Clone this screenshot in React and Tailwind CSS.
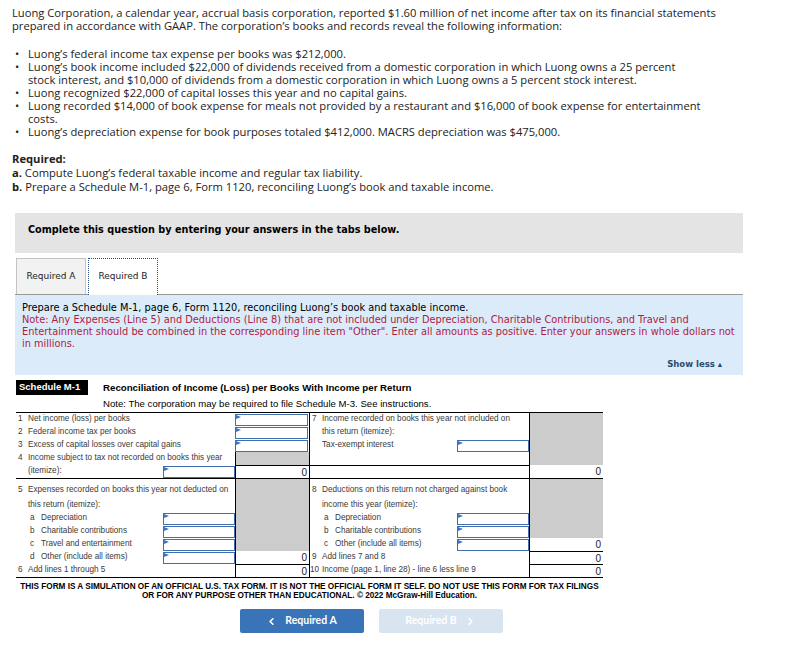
import React from "react";
import { ChevronLeft, ChevronRight } from "lucide-react";

const Flag = () => (
  <svg className="absolute left-0 top-0" width="5" height="5" viewBox="0 0 5 5">
    <polygon points="0,0 5,2 0,4" fill="#3f74c0" />
  </svg>
);

const Box = ({ className = "" }) => (
  <div className={"relative border border-[#3f6fae] bg-white " + className}>
    <Flag />
  </div>
);

// label cell (219px), value cell (74px)
const Lbl = ({ h, children, input, className = "" }) => (
  <div className={"relative flex items-center w-[219px] " + className} style={{ height: h }}>
    <div className="flex-1 whitespace-nowrap">{children}</div>
    {input && <Box className="w-[72px] h-[12px]" />}
  </div>
);

const Val = ({ h, kind, className = "" }) => {
  if (kind === "input") return <div className="w-[74px] flex items-center" style={{ height: h }}><Box className="w-[73px] h-[12px]" /></div>;
  return (
    <div
      className={"w-[74px] border-l border-black flex items-center justify-end pr-[2px] text-[10px] text-[#222] " + (kind === "gray" ? "bg-[#cccccc] " : "") + className}
      style={{ height: h }}
    >
      {kind === "gray" || kind === "blank" ? "" : kind}
    </div>
  );
};

const Row = ({ h, label, input, val, valClass, lclass }) => (
  <div className="flex">
    <Lbl h={h} input={input} className={lclass}>{label}</Lbl>
    <Val h={h} kind={val} className={valClass} />
  </div>
);

const Num = ({ n, children }) => (
  <span className="flex">
    <span className="w-[12px] pl-[2px]">{n}</span>
    <span>{children}</span>
  </span>
);

const Sub = ({ n, children }) => (
  <span className="flex pl-[14px]">
    <span className="w-[11px]">{n}</span>
    <span>{children}</span>
  </span>
);

const ScheduleM1 = () => {
  const H = [13, 13, 13, 13, 13, 19, 14, 13, 13, 13, 13, 13];
  return (
    <div className="ml-[4px] w-[587px] font-['Liberation_Sans',Arial,sans-serif]">
      <div className="flex items-start pt-[5px]">
        <div className="bg-black text-white font-bold text-[9.5px] w-[72px] h-[15px] flex items-center pl-[3px]">Schedule M-1</div>
        <div className="ml-[15px]">
          <div className="font-bold text-[9.7px] text-black leading-[15px]">Reconciliation of Income (Loss) per Books With Income per Return</div>
          <div className="text-[9.6px] text-black leading-[12px] mt-[3px]">Note: The corporation may be required to file Schedule M-3. See instructions.</div>
        </div>
      </div>
      <div className="flex border-t border-b border-black text-[8.2px] text-[#3a3a3a] mt-[2px]">
        {/* left half */}
        <div className="flex flex-col">
          <Row h={H[0]} label={<Num n="1">Net income (loss) per books</Num>} val="input" />
          <Row h={H[1]} label={<Num n="2">Federal income tax per books</Num>} val="input" />
          <Row h={H[2]} label={<Num n="3">Excess of capital losses over capital gains</Num>} val="input" />
          <Row h={H[3]} label={<Num n="4">Income subject to tax not recorded on books this year</Num>} val="gray" />
          <Row h={H[4]} label={<span className="pl-[12px]">(itemize):</span>} input val="0" valClass="border-t" />
          <div className="flex border-t border-black">
            <Lbl h={H[5]} className="items-end pb-[2px]"><Num n="5">Expenses recorded on books this year not deducted on</Num></Lbl>
            <Val h={H[5]} kind="gray" />
          </div>
          <Row h={H[6]} label={<span className="pl-[12px]">this return (itemize):</span>} val="gray" />
          <Row h={H[7]} label={<Sub n="a">Depreciation</Sub>} input val="gray" />
          <Row h={H[8]} label={<Sub n="b">Charitable contributions</Sub>} input val="gray" />
          <Row h={H[9]} label={<Sub n="c">Travel and entertainment</Sub>} input val="gray" />
          <Row h={H[10]} label={<Sub n="d">Other (include all items)</Sub>} input val="0" />
          <Row h={H[11]} label={<Num n="6">Add lines 1 through 5</Num>} val="0" valClass="border-t" />
        </div>
        {/* right half */}
        <div className="flex flex-col border-l border-black">
          <Row h={H[0]} label={<Num n="7">Income recorded on books this year not included on</Num>} val="gray" />
          <Row h={H[1]} label={<span className="pl-[12px]">this return (itemize):</span>} val="gray" />
          <Row h={H[2]} label={<span className="pl-[12px]">Tax-exempt interest</span>} input val="gray" />
          <Row h={H[3]} label="" val="gray" />
          <Row h={H[4]} label="" val="0" lclass="border-t border-black" />
          <div className="flex border-t border-black">
            <Lbl h={H[5]} className="items-end pb-[2px]"><Num n="8">Deductions on this return not charged against book</Num></Lbl>
            <Val h={H[5]} kind="gray" />
          </div>
          <Row h={H[6]} label={<span className="pl-[12px]">income this year (itemize):</span>} val="gray" />
          <Row h={H[7]} label={<Sub n="a">Depreciation</Sub>} input val="gray" />
          <Row h={H[8]} label={<Sub n="b">Charitable contributions</Sub>} input val="gray" />
          <Row h={H[9]} label={<Sub n="c">Other (include all items)</Sub>} input val="0" />
          <Row h={H[10]} label={<Num n="9">Add lines 7 and 8</Num>} val="0" valClass="border-t" />
          <Row h={H[11]} label={<span className="flex"><span className="w-[12px]">10</span><span>Income (page 1, line 28) - line 6 less line 9</span></span>} val="0" valClass="border-t" />
        </div>
      </div>
      <div className="text-center font-bold text-[8.2px] leading-[8.5px] text-black mt-[5px] -mx-[4px] whitespace-nowrap">
        THIS FORM IS A SIMULATION OF AN OFFICIAL U.S. TAX FORM. IT IS NOT THE OFFICIAL FORM IT SELF. DO NOT USE THIS FORM FOR TAX FILINGS
        <br />
        OR FOR ANY PURPOSE OTHER THAN EDUCATIONAL. © 2022 McGraw-Hill Education.
      </div>
    </div>
  );
};

const bullets = [
  "Luong’s federal income tax expense per books was $212,000.",
  "Luong’s book income included $22,000 of dividends received from a domestic corporation in which Luong owns a 25 percent stock interest, and $10,000 of dividends from a domestic corporation in which Luong owns a 5 percent stock interest.",
  "Luong recognized $22,000 of capital losses this year and no capital gains.",
  "Luong recorded $14,000 of book expense for meals not provided by a restaurant and $16,000 of book expense for entertainment costs.",
  "Luong’s depreciation expense for book purposes totaled $412,000. MACRS depreciation was $475,000.",
];

export default function App() {
  return (
    <div className="bg-white w-[805px] min-h-[667px] pl-[12px] pt-[6px] font-['Open_Sans',sans-serif] text-[#222]">
      <p className="text-[11.2px] leading-[13px] w-[720px]">
        Luong Corporation, a calendar year, accrual basis corporation, reported $1.60 million of net income after tax on its financial statements prepared in accordance with GAAP. The corporation’s books and records reveal the following information:
      </p>
      <ul className="mt-[15px] text-[11.2px] leading-[13px] w-[692px]">
        {bullets.map((b, i) => (
          <li key={i} className="flex">
            <span className="w-[16px] pl-[3px]">•</span>
            <span className="flex-1">{b}</span>
          </li>
        ))}
      </ul>
      <div className="mt-[14px] text-[11.2px] leading-[14px]">
        <div className="font-bold">Required:</div>
        <div><b>a.</b> Compute Luong’s federal taxable income and regular tax liability.</div>
        <div><b>b.</b> Prepare a Schedule M-1, page 6, Form 1120, reconciling Luong’s book and taxable income.</div>
      </div>

      <div className="ml-[3px] w-[728px] mt-[19px] font-['DejaVu_Sans',Verdana,sans-serif]">
        <div className="bg-[#e4e4e4] h-[40px] pl-[13px] pt-[10px] text-[9.7px] font-bold text-black">
          Complete this question by entering your answers in the tabs below.
        </div>
        <div className="flex mt-[5px] border-b border-[#9a9a9a] h-[37px] text-[9px] text-[#222]">
          <div className="ml-[1px] w-[70px] h-[36px] bg-[#f2f2f2] border border-b-0 border-[#c4c4c4] flex items-center justify-center">Required A</div>
          <div className="ml-[2px] w-[70px] h-[37px] bg-white border border-dotted border-b-0 border-[#2a4c7c] flex items-center justify-center -mb-[1px]">Required B</div>
        </div>
        <div className="bg-[#dbebf9] h-[80px] px-[7px] pt-[7px] text-[9.8px] leading-[12px] relative">
          <div className="text-black">Prepare a Schedule M-1, page 6, Form 1120, reconciling Luong’s book and taxable income.</div>
          <div className="text-[#b0213f]">
            Note: Any Expenses (Line 5) and Deductions (Line 8) that are not included under Depreciation, Charitable Contributions, and Travel and Entertainment should be combined in the corresponding line item "Other". Enter all amounts as positive. Enter your answers in whole dollars not in millions.
          </div>
          <div className="absolute right-[21px] bottom-[5px] text-[8.5px] font-bold text-[#2a4a70]">Show less ▴</div>
        </div>
      </div>

      <ScheduleM1 />

      <div className="flex justify-center gap-[15px] mt-[9px] w-[743px] pr-[25px] font-['Lato',sans-serif]">
        <button className="w-[124px] h-[24px] rounded-[2px] bg-[#3a74b8] text-white text-[10.5px] font-bold flex items-center justify-center gap-[8px]">
          <ChevronLeft size={11} strokeWidth={3.5} />Required A
        </button>
        <button className="w-[124px] h-[24px] rounded-[2px] bg-[#d9e4f1] text-white text-[10.5px] font-bold flex items-center justify-center gap-[8px]">
          Required B<ChevronRight size={11} strokeWidth={3.5} />
        </button>
      </div>
    </div>
  );
}
